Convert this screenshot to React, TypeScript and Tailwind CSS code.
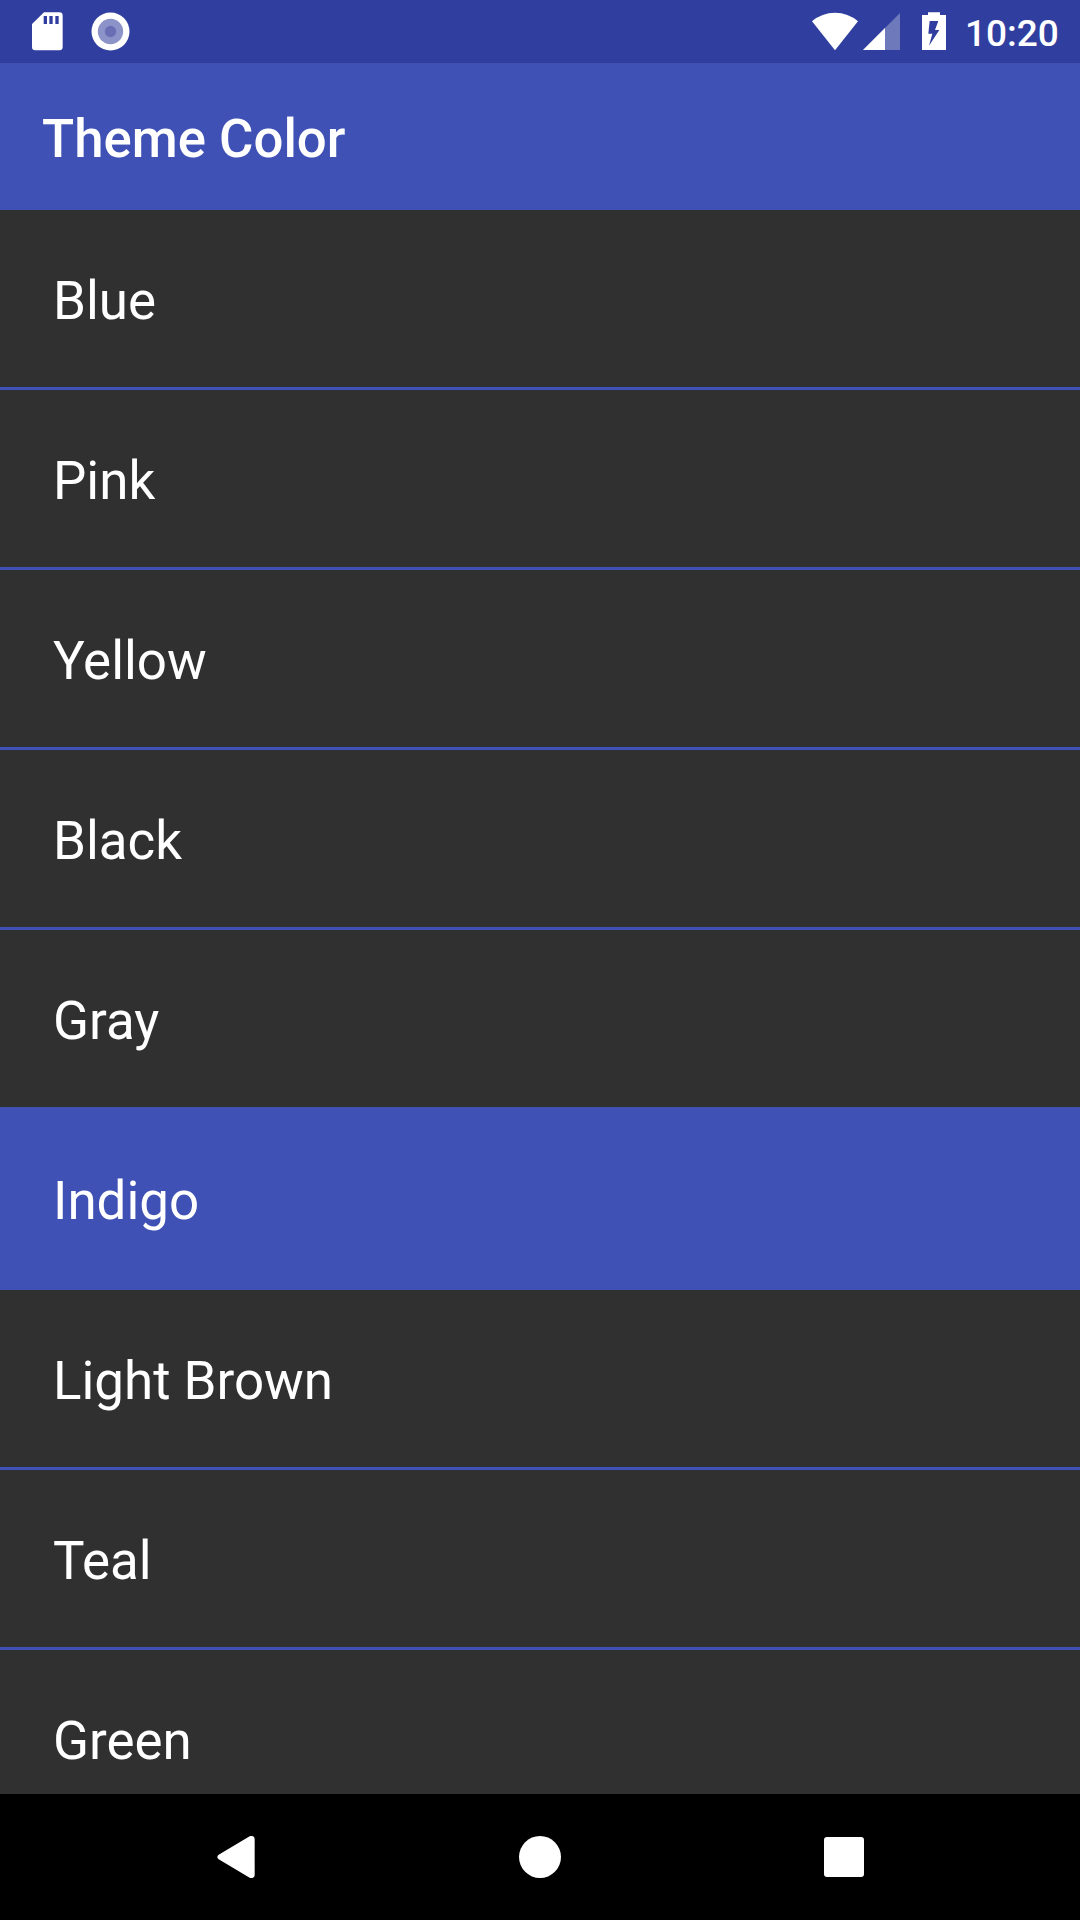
const COLORS = ["Blue", "Pink", "Yellow", "Black", "Gray", "Indigo", "Light Brown", "Teal", "Green"];

function StatusBar() {
  return (
    <div className="flex h-[63px] shrink-0 items-start justify-between bg-[#303f9f]">
      <div className="flex pl-[30px]">
        <svg className="h-[63px] w-9" viewBox="90 0 108 189" fill="none">
          <path
            fill="#fff"
            fillRule="evenodd"
            d="M132 37H178Q188 37 188 47V141Q188 151 178 151H106Q96 151 96 141V72Z M131 48V72H141V48Z M148 48V72H158V48Z M166 48V72H176V48Z"
          />
        </svg>
        <svg className="ml-6 h-[63px] w-10" viewBox="270 0 120 189">
          <circle cx="331.500" cy="94.500" r="57" fill="#fff" />
          <circle cx="331.500" cy="94.500" r="38" fill="#8c93c9" />
          <circle cx="331.500" cy="94.500" r="17" fill="#686fb5" />
        </svg>
      </div>
      <div className="flex w-[269px]">
        <svg className="h-[63px] w-12 shrink-0" viewBox="33 0 144 189">
          <path fill="#fff" d="M36 64Q66 38.500 105 38.500Q144 38.500 174 64L105 150.500Z" />
        </svg>
        <svg className="ml-1 h-[63px] w-[37px] shrink-0" viewBox="189 0 111 189">
          <path fill="#fff" fillOpacity=".3" d="M300 39V150H189Z" />
          <path fill="#fff" d="M255 84V150H189Z" />
        </svg>
        <svg className="ml-[22px] h-[63px] w-6 shrink-0" viewBox="366 0 72 189">
          <path
            fill="#fff"
            fillRule="evenodd"
            d="M384 36.500H420V45H438V150H366V45H384Z M389 63L385 101H397L387 137L418 90H405L415 63Z"
          />
        </svg>
        <span className="ml-[19px] mt-[12px] text-[37px] leading-[43px] font-medium">10:20</span>
      </div>
    </div>
  );
}

function NavBar() {
  return (
    <div className="flex h-[126px] shrink-0 items-center bg-black pl-[217px]">
      <svg className="h-[42px] w-[38px]" viewBox="51 168 114 126">
        <path fill="#fff" d="M149 169Q154 166 159 169Q164 171 164 177V286Q164 291 159 293Q154 296 149 293L56 238Q52 235 52 231Q52 227 56 224Z" />
      </svg>
      <div className="ml-[264px] size-[42px] rounded-full bg-white" />
      <div className="ml-[263px] size-10 rounded-[3px] bg-white" />
    </div>
  );
}

export default function App() {
  return (
    <div className="flex h-[1920px] w-[1080px] flex-col overflow-hidden bg-[#303030] font-[Roboto,sans-serif] text-white">
      <StatusBar />
      <header className="h-[147px] shrink-0 bg-[#3f51b5] pt-[45px] pl-[42px]">
        <h1 className="text-[52.75px] leading-[62px] font-medium">Theme Color</h1>
      </header>
      <ul className="min-h-0 flex-1 overflow-hidden">
        {COLORS.map((name) => (
          <li
            key={name}
            className={
              name === "Indigo"
                ? "h-[180px] border-b-[3px] border-[#3f51b5] bg-[#3f51b5] pt-[60px] pl-[53px] text-[52.9px] leading-[62px]"
                : "h-[180px] border-b-[3px] border-[#3f51b5] pt-[60px] pl-[53px] text-[52.9px] leading-[62px]"
            }
          >
            {name}
          </li>
        ))}
      </ul>
      <NavBar />
    </div>
  );
}
